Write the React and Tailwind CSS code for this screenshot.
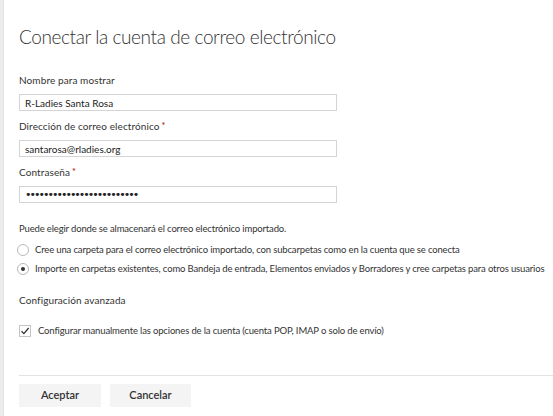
import React from "react";

const font = { fontFamily: 'Lato, "Open Sans", sans-serif' };

function Label({ children, required, small }) {
  return (
    <div
      className={
        "leading-[14px] text-[#333333] " +
        (small ? "text-[9.5px] tracking-[-0.15px]" : "text-[10px] tracking-[0.1px]")
      }
    >
      {children}
      {required && <span className="text-[#a80000] ml-[2px] align-top text-[9px]">*</span>}
    </div>
  );
}

function Input({ value, password }) {
  return (
    <div className="w-[318px] h-[17px] border border-[#d4d4d4] bg-white flex items-center pl-[5px] text-[10px] text-[#222] leading-none">
      {password ? (
        <span
          className="text-[11px] text-[#222] tracking-[-2px]"
          style={{ fontFamily: '"DejaVu Sans", sans-serif' }}
        >
          {"•".repeat(25)}
        </span>
      ) : (
        value
      )}
    </div>
  );
}

function Radio({ checked, children, className }) {
  return (
    <div className={"flex items-center h-[14px] " + (className || "")}>
      <span className="w-[12px] h-[12px] rounded-full border border-[#b8b8b8] bg-white flex items-center justify-center shrink-0 -ml-[2px]">
        {checked && <span className="w-[4px] h-[4px] rounded-full bg-[#333]" />}
      </span>
      <span className="ml-[6px] text-[9.5px] text-[#333] whitespace-nowrap tracking-[-0.15px]">{children}</span>
    </div>
  );
}

export default function App() {
  return (
    <div className="w-[553px] h-[416px] bg-white flex overflow-hidden" style={font}>
      <div className="w-[4px] h-full bg-[#ececec] border-r border-[#e4e4e4]" />
      <div className="flex-1 pl-[15px] pt-[23px]">
        <div className="text-[19px] leading-[28px] font-light text-[#333] tracking-[-0.4px]">
          Conectar la cuenta de correo electrónico
        </div>
        <div className="mt-[22px]"><Label>Nombre para mostrar</Label></div>
        <div className="mt-[7px]"><Input value="R-Ladies Santa Rosa" /></div>
        <div className="mt-[8px]"><Label required>Dirección de correo electrónico</Label></div>
        <div className="mt-[7px]"><Input value="santarosa@rladies.org" /></div>
        <div className="mt-[8px]"><Label required>Contraseña</Label></div>
        <div className="mt-[7px]"><Input password /></div>
        <div className="mt-[19px]"><Label small>Puede elegir donde se almacenará el correo electrónico importado.</Label></div>
        <Radio className="mt-[7px]">Cree una carpeta para el correo electrónico importado, con subcarpetas como en la cuenta que se conecta</Radio>
        <Radio checked className="mt-[5px]">Importe en carpetas existentes, como Bandeja de entrada, Elementos enviados y Borradores y cree carpetas para otros usuarios</Radio>
        <div className="mt-[17px]"><Label>Configuración avanzada</Label></div>
        <div className="mt-[17px] flex items-center h-[14px]">
          <span className="w-[12px] h-[12px] border border-[#c4c4c4] bg-white flex items-center justify-center shrink-0">
            <svg width="10" height="10" viewBox="0 0 10 10">
              <path d="M1.5 5.2 L3.9 7.6 L8.6 2" fill="none" stroke="#333" strokeWidth="1.3" />
            </svg>
          </span>
          <span className="ml-[7px] text-[9.5px] text-[#333] whitespace-nowrap tracking-[-0.15px]">
            Configurar manualmente las opciones de la cuenta (cuenta POP, IMAP o solo de envío)
          </span>
        </div>
        <div className="mt-[37px] h-[1px] bg-[#e2e2e2]" />
        <div className="mt-[8px] flex gap-[9px]">
          <button className="w-[82px] h-[23px] bg-[#f4f4f4] text-[11px] font-semibold text-[#333]">Aceptar</button>
          <button className="w-[81px] h-[23px] bg-[#f4f4f4] text-[11px] font-semibold text-[#333]">Cancelar</button>
        </div>
      </div>
    </div>
  );
}
